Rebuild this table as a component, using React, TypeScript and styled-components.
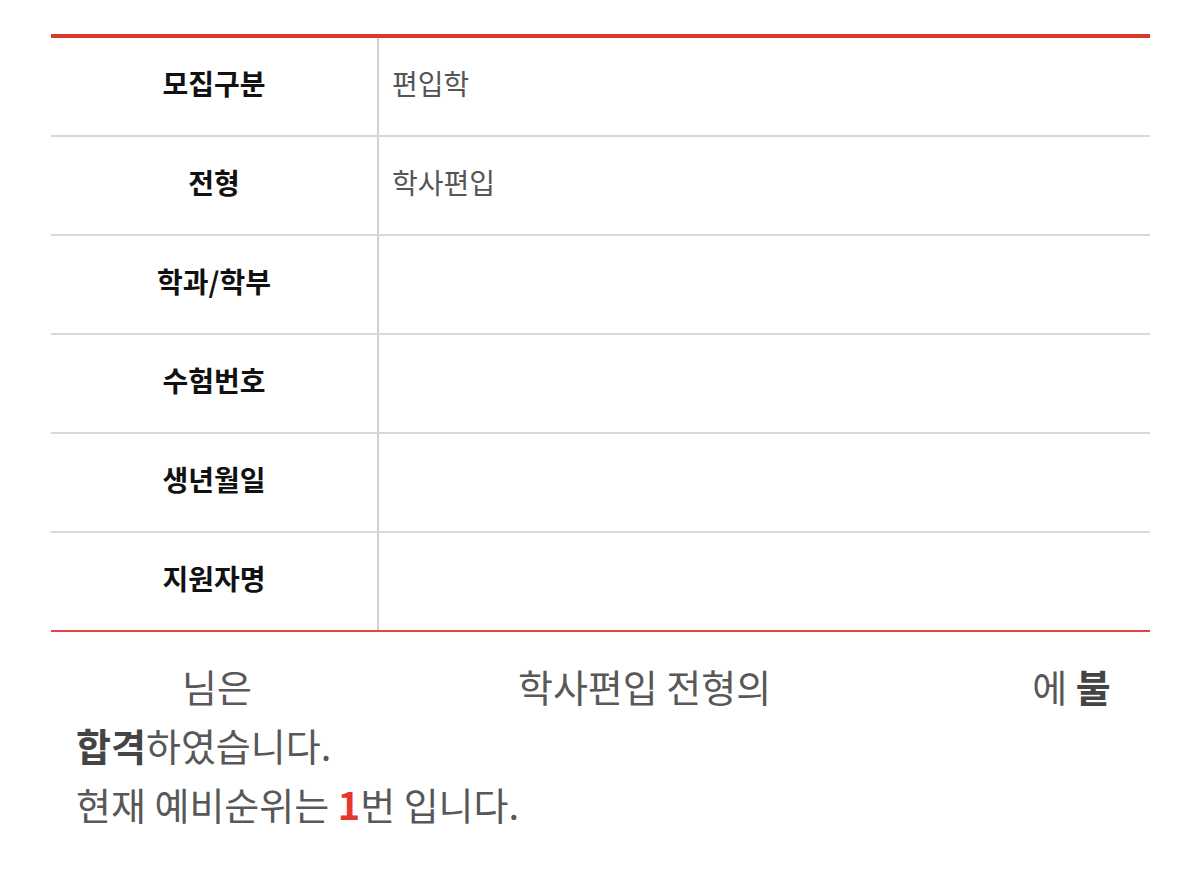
import styled, { createGlobalStyle } from "styled-components";

const GlobalStyle = createGlobalStyle`
  body {
    margin: 0;
    background: #ffffff;
    font-family: "Noto Sans CJK KR", "Noto Sans", sans-serif;
  }
`;

const Page = styled.div`
  padding: 34px 50px 40px 51px;
  width: 1099px;
`;

const Table = styled.div`
  border-top: 4px solid #d93a2c;
  display: flex;
  flex-direction: column;
`;

const Row = styled.div<{ $last?: boolean }>`
  display: grid;
  grid-template-columns: 328px 1fr;
  height: 97px;
  border-bottom: 2px solid ${(props) => (props.$last ? "#e2463d" : "#d8d8d8")};
`;

const LabelCell = styled.div`
  display: flex;
  align-items: center;
  justify-content: center;
  border-right: 2px solid #d0d0d0;
  font-size: 28px;
  font-weight: 700;
  color: #111111;
  padding-bottom: 8px;
`;

const ValueCell = styled.div`
  display: flex;
  align-items: center;
  padding: 0 0 8px 13px;
  font-size: 28px;
  color: #555555;
`;

const Message = styled.p`
  margin: 24px 0 0;
  padding-left: 25px;
  font-size: 38px;
  line-height: 59px;
  color: #585858;
`;

const Blank = styled.span<{ $w: number }>`
  display: inline-block;
  width: ${(props) => props.$w}px;
`;

const Strong = styled.b`
  font-weight: 700;
  color: #444444;
`;

const Rank = styled.b`
  font-weight: 700;
  color: #e2382d;
`;

const rows = [
  { label: "모집구분", value: "편입학" },
  { label: "전형", value: "학사편입" },
  { label: "학과/학부", value: "" },
  { label: "수험번호", value: "" },
  { label: "생년월일", value: "" },
  { label: "지원자명", value: "" },
];

function App() {
  return (
    <Page>
      <GlobalStyle />
      <Table>
        {rows.map((row, i) => (
          <Row key={row.label} $last={i === rows.length - 1}>
            <LabelCell>{row.label}</LabelCell>
            <ValueCell>{row.value}</ValueCell>
          </Row>
        ))}
      </Table>
      <Message>
        <Blank $w={106} />
        님은
        <Blank $w={266} />
        학사편입 전형의
        <Blank $w={261} />
        에 <Strong>불</Strong>
        <br />
        <Strong>합격</Strong>하였습니다.
        <br />
        현재 예비순위는 <Rank>1</Rank>번 입니다.
      </Message>
    </Page>
  );
}

export default App;
